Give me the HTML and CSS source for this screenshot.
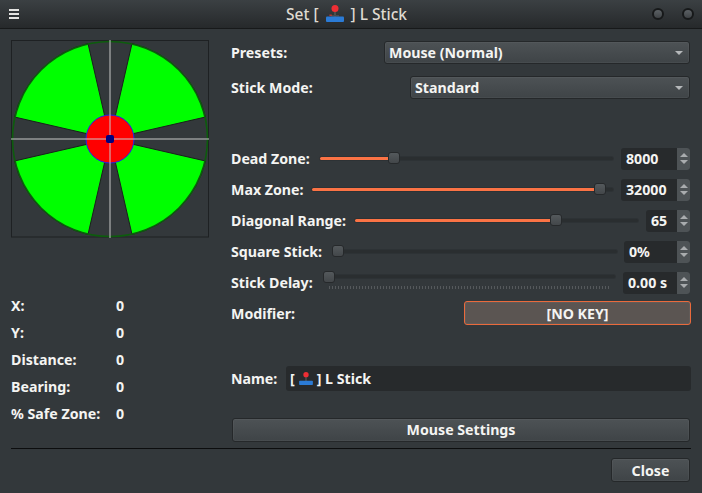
FILE: index.html
```html
<!DOCTYPE html>
<html lang="en">
<head>
  <meta charset="UTF-8">
  <title>Set L Stick</title>
  <link rel="stylesheet" href="styles.css">
</head>
<body>
  <header class="titlebar">
    <div class="menu-icon"><span></span><span></span><span></span></div>
    <div class="title">Set [
      <svg class="joy joy-big" viewBox="0 0 18 17"><rect x="8.2" y="5" width="1.6" height="7" fill="#555"/><rect x="5" y="10" width="8" height="1.6" fill="#4a4a4a"/><rect x="3.4" y="9.6" width="2.4" height="1.2" fill="#d33"/><circle cx="9" cy="3.5" r="3.5" fill="#ee2e34"/><rect x="0" y="11.4" width="18" height="5.6" rx="1" fill="#2b7bd6"/></svg>
      ] L Stick</div>
    <div class="win-buttons"><span class="win-btn"></span><span class="win-btn"></span></div>
  </header>

  <div class="content">
    <div class="columns">
      <div class="left-col">
        <svg class="stick" viewBox="0 0 199 198">
          <rect x="0.5" y="0.5" width="197" height="196.5" fill="none" stroke="#1e2123"/>
          <g fill="#00ff00" stroke="#1a1f1c" stroke-width="1">
            <path d="M99 99 L77 3.5 A98 98 0 0 0 3.5 77 Z"/>
            <path d="M99 99 L121 3.5 A98 98 0 0 1 194.5 77 Z"/>
            <path d="M99 99 L3.5 121 A98 98 0 0 0 77 194.5 Z"/>
            <path d="M99 99 L194.5 121 A98 98 0 0 1 121 194.5 Z"/>
          </g>
          <circle cx="99" cy="99" r="97.5" fill="none" stroke="#0d5c0d" stroke-width="1.6"/>
          <circle cx="99" cy="99" r="24" fill="#ff0000" stroke="#2222ee" stroke-width="1"/>
          <g stroke="#c8c8c8" stroke-opacity="0.5" stroke-width="2">
            <line x1="99" y1="0" x2="99" y2="198"/>
            <line x1="0" y1="99" x2="198" y2="99"/>
          </g>
          <rect x="95" y="95" width="8" height="8" rx="2" fill="#000080"/>
        </svg>
        <div class="stats">
          <span>X:</span><span>0</span>
          <span>Y:</span><span>0</span>
          <span>Distance:</span><span>0</span>
          <span>Bearing:</span><span>0</span>
          <span>% Safe Zone:</span><span>0</span>
        </div>
      </div>

      <div class="right-col">
        <div class="row combo-row">
          <label>Presets:</label>
          <div class="combo combo-presets">Mouse (Normal)</div>
        </div>
        <div class="row combo-row">
          <label>Stick Mode:</label>
          <div class="combo combo-mode">Standard</div>
        </div>

        <div class="sliders">
          <div class="row">
            <label class="lbl-dead">Dead Zone:</label>
            <div class="slider"><div class="track"><div class="fill" style="width: 25.3%"></div></div><div class="thumb" style="left: 25.3%"></div></div>
            <div class="spin spin-wide"><span>8000</span><div class="spin-btns"><i class="up"></i><i class="down"></i></div></div>
          </div>
          <div class="row">
            <label class="lbl-max">Max Zone:</label>
            <div class="slider"><div class="track"><div class="fill" style="width: 95.7%"></div></div><div class="thumb" style="left: 95.7%"></div></div>
            <div class="spin spin-wide"><span>32000</span><div class="spin-btns"><i class="up"></i><i class="down"></i></div></div>
          </div>
          <div class="row">
            <label class="lbl-diag">Diagonal Range:</label>
            <div class="slider"><div class="track"><div class="fill" style="width: 71%"></div></div><div class="thumb" style="left: 71%"></div></div>
            <div class="spin spin-small"><span>65</span><div class="spin-btns"><i class="up"></i><i class="down"></i></div></div>
          </div>
          <div class="row">
            <label class="lbl-square">Square Stick:</label>
            <div class="slider"><div class="track"></div><div class="thumb" style="left: 1.8%"></div></div>
            <div class="spin spin-pct"><span>0%</span><div class="spin-btns"><i class="up"></i><i class="down"></i></div></div>
          </div>
          <div class="row">
            <label class="lbl-delay">Stick Delay:</label>
            <div class="slider slider-ticks"><div class="track"></div><div class="thumb" style="left: 1.4%"></div><div class="ticks"></div></div>
            <div class="spin spin-delay"><span>0.00 s</span><div class="spin-btns"><i class="up"></i><i class="down"></i></div></div>
          </div>
        </div>

        <div class="row modifier-row">
          <label>Modifier:</label>
          <button class="btn btn-key">[NO KEY]</button>
        </div>

        <div class="row name-row">
          <label>Name:</label>
          <div class="name-input">[
            <svg class="joy joy-small" viewBox="0 0 18 17"><rect x="8.2" y="5" width="1.6" height="7" fill="#555"/><circle cx="9" cy="3.5" r="3.5" fill="#ee2e34"/><rect x="0" y="11.4" width="18" height="5.6" rx="1" fill="#2b7bd6"/></svg>
            ] L Stick</div>
        </div>

        <button class="btn btn-mouse">Mouse Settings</button>
      </div>
    </div>

    <div class="rule"></div>
    <div class="footer">
      <button class="btn btn-close">Close</button>
    </div>
  </div>
</body>
</html>
```

FILE: styles.css
```css
body {
  margin: 0;
  width: 702px;
  height: 493px;
  overflow: hidden;
  background-color: #33383b;
  color: #f4f4f2;
  font-family: "Noto Sans", "Open Sans", sans-serif;
  font-size: 14.2px;
  font-weight: 700;
}
.titlebar {
  height: 28px;
  display: flex;
  align-items: center;
  justify-content: space-between;
  background: linear-gradient(#3b4043, #26292b);
  border-bottom: 1px solid #17191a;
}
.menu-icon {
  width: 10px;
  margin-left: 9px;
  display: flex;
  flex-direction: column;
  gap: 2px;
}
.menu-icon span {
  height: 2px;
  background-color: #e4e4e2;
}
.title {
  display: flex;
  align-items: center;
  gap: 6px;
  margin-left: 22px;
  color: #dfdbd2;
  font-size: 15.5px;
  font-weight: 500;
}
.joy {
  display: block;
}
.joy-big {
  width: 18px;
  height: 17px;
  margin: -1px 1px 0;
}
.joy-small {
  width: 14px;
  height: 13px;
}
.win-buttons {
  display: flex;
  gap: 18px;
  margin-right: 8px;
}
.win-btn {
  width: 8px;
  height: 8px;
  border-radius: 50%;
  border: 2px solid #17191a;
  background: linear-gradient(#5c6165, #3f4346);
}

.content {
  padding: 11px 11px 0;
}
.columns {
  display: flex;
  gap: 21px;
}
.left-col {
  width: 199px;
  flex: none;
}
.stick {
  display: block;
  width: 199px;
  height: 198px;
}
.stats {
  display: grid;
  grid-template-columns: 105px auto;
  grid-auto-rows: 27px;
  align-items: center;
  margin-top: 54px;
}
.right-col {
  flex: 1;
  padding-top: 1px;
}
.row {
  display: flex;
  align-items: center;
  height: 23px;
}
.combo-row {
  justify-content: space-between;
  margin-bottom: 12px;
}
.combo, .btn {
  box-sizing: border-box;
  border: 1px solid #25282a;
  border-radius: 3px;
  background: linear-gradient(#4d5255, #3f4447);
  box-shadow: inset 0 0 0 1px rgba(255, 255, 255, 0.04);
  color: #f4f4f2;
  font: inherit;
}
.combo {
  position: relative;
  height: 23px;
  line-height: 21px;
  padding-left: 4px;
  margin-right: 1px;
}
.combo::after {
  content: "";
  position: absolute;
  right: 6px;
  top: 9px;
  border-left: 4px solid transparent;
  border-right: 4px solid transparent;
  border-top: 4px solid #b5b8ba;
}
.combo-presets {
  width: 306px;
}
.combo-mode {
  width: 280px;
}

.sliders {
  display: flex;
  flex-direction: column;
  gap: 8px;
  margin-top: 48px;
}
.row label {
  flex: none;
}
.lbl-dead { width: 89px; }
.lbl-max { width: 81px; }
.lbl-diag { width: 124px; }
.lbl-square { width: 102px; }
.lbl-delay { width: 94px; }
.slider {
  position: relative;
  flex: 1;
  height: 23px;
}
.track {
  position: absolute;
  left: 0;
  right: 0;
  top: 10px;
  height: 3px;
  background-color: #2a2e30;
  border-radius: 2px;
  box-shadow: 0 0 0 1px rgba(0, 0, 0, 0.1);
}
.fill {
  height: 3px;
  background-color: #fb7345;
  border-radius: 2px;
}
.thumb {
  position: absolute;
  top: 5px;
  width: 10px;
  height: 10px;
  margin-left: -6px;
  border: 1px solid #26292b;
  border-radius: 3px;
  background: linear-gradient(#54595c, #43474a);
}
.slider-ticks .track {
  top: 4px;
}
.slider-ticks .thumb {
  top: 0;
}
.ticks {
  position: absolute;
  left: 4px;
  right: 5px;
  top: 15px;
  height: 3px;
  background: repeating-linear-gradient(90deg, #55595c 0 1px, transparent 1px 3px);
}
.spin {
  flex: none;
  display: flex;
  justify-content: space-between;
  height: 22px;
  line-height: 22px;
  margin-left: 8px;
  margin-right: 1px;
  padding-left: 5px;
  box-sizing: border-box;
  background-color: #272a2c;
  border-radius: 3px;
  overflow: hidden;
}
.spin-wide { width: 69px; }
.spin-small { width: 44px; }
.spin-pct { width: 66px; margin-left: 7px; }
.spin-delay { width: 67px; }
.spin-btns {
  width: 13px;
  display: flex;
  flex-direction: column;
  align-items: center;
  justify-content: center;
  gap: 3px;
  background-color: #4e5356;
}
.spin-btns i {
  border-left: 4px solid transparent;
  border-right: 4px solid transparent;
}
.spin-btns .up {
  border-bottom: 4px solid #a9acae;
}
.spin-btns .down {
  border-top: 4px solid #a9acae;
}
.modifier-row {
  justify-content: space-between;
  margin-top: 7px;
  height: 24px;
}
.btn-key {
  width: 227px;
  height: 24px;
  padding: 0;
  border-color: #ea6a3c;
  background: #5b5552;
}
.name-row {
  height: 25px;
  margin-top: 41px;
}
.name-row label {
  width: 55px;
}
.name-input {
  flex: 1;
  display: flex;
  align-items: center;
  gap: 4px;
  height: 25px;
  padding-left: 4px;
  background-color: #272a2c;
  border-radius: 3px;
}
.btn-mouse {
  display: block;
  width: 458px;
  height: 24px;
  margin: 27px 0 0 1px;
  padding: 0 0 2px;
}
.rule {
  height: 1px;
  margin-top: 6px;
  background-color: #0c0d0e;
}
.footer {
  display: flex;
  justify-content: flex-end;
  margin-top: 9px;
}
.btn-close {
  width: 79px;
  height: 24px;
  margin-right: 1px;
  padding: 0;
}
```
